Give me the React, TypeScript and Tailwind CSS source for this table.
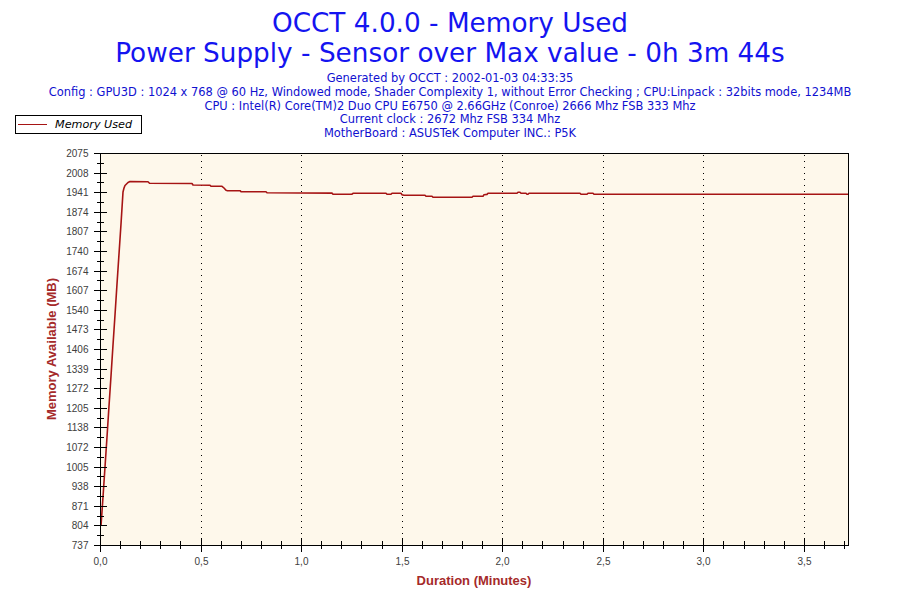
const PLOT = { left: 100, top: 153, right: 848, bottom: 545 };
const X_SCALE = 201.1; // px per minute

const yLabels = [
  2075, 2008, 1941, 1874, 1807, 1740, 1674, 1607, 1540, 1473, 1406, 1339, 1272, 1205, 1138, 1072, 1005,
  938, 871, 804, 737,
];

const xMinor = Array.from({ length: 38 }, (_, i) => i / 10);

const line = [
  [101, 526], [103, 497], [105, 467], [107, 437], [109, 406], [111, 376],
  [113, 345], [115, 315], [117, 284], [119, 254], [121, 224], [122.5, 200],
  [123, 192], [124, 188], [125, 185.5], [126.5, 184], [128, 182.5], [130, 181.6],
  [148, 181.8], [149.5, 183.3], [192, 183.5], [193, 185], [210, 185.2], [211, 186.3],
  [222, 186.3], [224, 188], [226, 190.2], [227, 190.6], [240, 190.7], [241, 191.6],
  [266, 191.8], [267, 192.8], [332, 193.1], [333, 194.2], [352, 194.2], [353, 193.3],
  [386, 193.3], [387, 194.3], [391, 194.3], [392, 193.3], [401, 193.3], [402, 194.7],
  [404, 195.3], [425, 195.3], [426, 196.3], [432, 196.3], [433, 197.3], [472, 197.3],
  [473, 196.3], [483, 196.3], [484, 194.7], [487, 194.4], [488, 193.3], [517, 193.3],
  [518, 192.3], [520, 192.3], [521, 193.3], [526, 193.3], [527, 194.3], [528, 194.3],
  [529, 193.3], [580, 193.3], [581, 194.3], [587, 194.3], [588, 193.3], [593, 193.3],
  [594, 194.3], [848, 194.3],
];

function yAt(i: number) {
  return PLOT.top + i * ((PLOT.bottom - PLOT.top) / 20);
}

function Chart() {
  const points = line.map(([x, y]) => `${x},${y}`).join(" ");
  const gridX = [0.5, 1, 1.5, 2, 2.5, 3, 3.5].map((t) => PLOT.left + t * X_SCALE);

  return (
    <svg
      width={900}
      height={460}
      viewBox="0 140 900 460"
      className="block font-['Liberation_Sans',Arial,sans-serif]"
    >
      <rect
        x={PLOT.left}
        y={PLOT.top}
        width={PLOT.right - PLOT.left}
        height={PLOT.bottom - PLOT.top}
        fill="#fef8eb"
      />

      {gridX.map((x) => (
        <line
          key={x}
          x1={Math.round(x) + 0.5}
          x2={Math.round(x) + 0.5}
          y1={PLOT.top + 2}
          y2={PLOT.bottom - 3}
          stroke="#000"
          strokeWidth={1}
          strokeDasharray="1 5"
        />
      ))}

      <polyline points={points} fill="none" stroke="#a61414" strokeWidth={1.6} strokeLinejoin="round" />

      <rect
        x={PLOT.left + 0.5}
        y={PLOT.top + 0.5}
        width={PLOT.right - PLOT.left}
        height={PLOT.bottom - PLOT.top}
        fill="none"
        stroke="#000"
        strokeWidth={1}
      />

      {/* y axis ticks + labels */}
      {yLabels.map((v, i) => {
        const y = Math.round(yAt(i)) + 0.5;
        return (
          <g key={v}>
            <line x1={94} x2={107} y1={y} y2={y} stroke="#000" />
            <text x={88.5} y={y + 3.6} fontSize={10} fill="#404040" textAnchor="end">
              {v}
            </text>
          </g>
        );
      })}
      {yLabels.slice(0, 20).map((v, i) => {
        const y = Math.round(yAt(i + 0.5)) + 0.5;
        return <line key={`m${v}`} x1={97} x2={104} y1={y} y2={y} stroke="#000" />;
      })}

      {/* x axis ticks + labels */}
      {xMinor.map((t, i) => {
        const x = Math.round(PLOT.left + t * X_SCALE) + 0.5;
        const major = i % 5 === 0;
        return (
          <g key={i}>
            <line
              x1={x}
              x2={x}
              y1={major ? 538 : 541}
              y2={major ? 552 : 549}
              stroke="#000"
            />
            {major && (
              <text x={x} y={564.5} fontSize={10} fill="#404040" textAnchor="middle">
                {t.toFixed(1).replace(".", ",")}
              </text>
            )}
          </g>
        );
      })}

      <text
        x={56}
        y={349}
        transform="rotate(-90 56 349)"
        fontSize={13}
        fontWeight="bold"
        fill="#a52a2a"
        textAnchor="middle"
      >
        Memory Available (MB)
      </text>
      <text x={474} y={584.5} fontSize={13} fontWeight="bold" fill="#a52a2a" textAnchor="middle">
        Duration (Minutes)
      </text>
    </svg>
  );
}

export default function App() {
  return (
    <div className="w-[900px] h-[600px] bg-white overflow-hidden font-['DejaVu_Sans',Verdana,sans-serif]">
      <header className="relative h-[140px] pt-[8px] text-center">
        <div className="text-[26.3px] leading-[30px] text-[#1414f0]">OCCT 4.0.0 - Memory Used</div>
        <div className="text-[26.3px] leading-[30px] text-[#1414f0]">
          Power Supply - Sensor over Max value - 0h 3m 44s
        </div>
        <div className="mt-[4px] whitespace-nowrap text-[11.45px] leading-[13.75px] text-[#1010d0]">
          <div>Generated by OCCT : 2002-01-03 04:33:35</div>
          <div>
            Config : GPU3D : 1024 x 768 @ 60 Hz, Windowed mode, Shader Complexity 1, without Error Checking ;
            CPU:Linpack : 32bits mode, 1234MB
          </div>
          <div>CPU : Intel(R) Core(TM)2 Duo CPU E6750 @ 2.66GHz (Conroe) 2666 Mhz FSB 333 Mhz</div>
          <div>Current clock : 2672 Mhz FSB 334 Mhz</div>
          <div>MotherBoard : ASUSTeK Computer INC.: P5K</div>
        </div>

        <div className="absolute left-[15px] top-[115px] flex h-[19px] w-[127px] items-center gap-[8px] border border-black bg-white pl-[2px]">
          <span className="h-px w-[29px] bg-[#a61414]" />
          <span className="text-[11.2px] italic leading-none text-black">Memory Used</span>
        </div>
      </header>
      <Chart />
    </div>
  );
}
